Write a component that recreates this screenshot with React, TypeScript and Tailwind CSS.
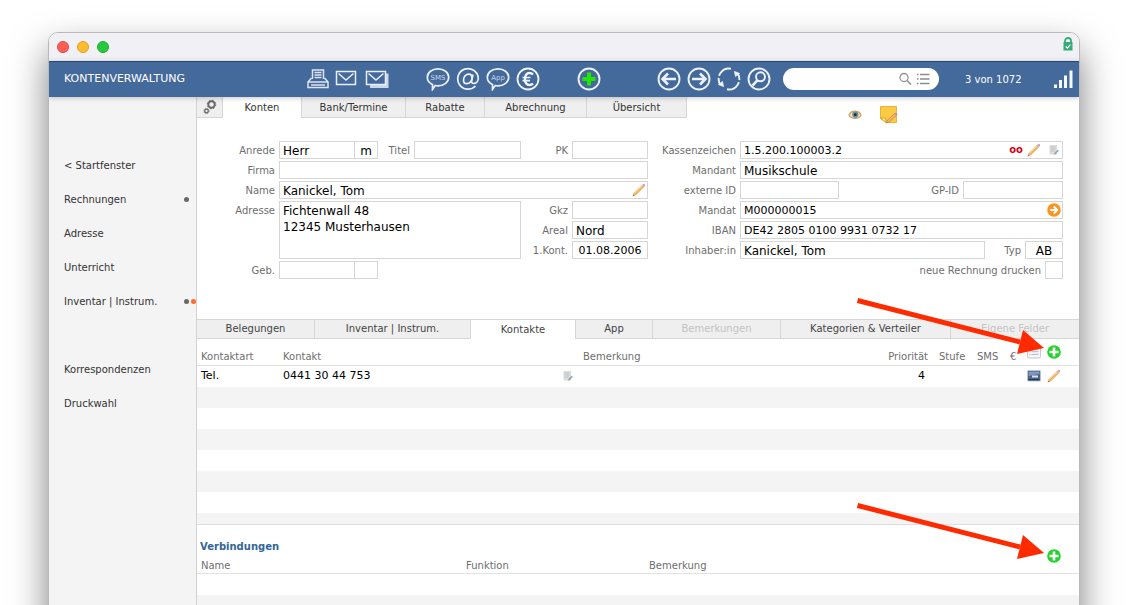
import type { ReactNode } from 'react'
import { clsx } from 'clsx'

const sidebarItems = [
  { label: '< Startfenster' },
  { label: 'Rechnungen', dot: true },
  { label: 'Adresse' },
  { label: 'Unterricht' },
  { label: 'Inventar | Instrum.', dot: true, alert: true },
  null,
  { label: 'Korrespondenzen' },
  { label: 'Druckwahl' },
]

const mainTabs = [
  { label: 'Konten', width: 'w-[78px]', active: true },
  { label: 'Bank/Termine', width: 'w-[104px]' },
  { label: 'Rabatte', width: 'w-[79px]' },
  { label: 'Abrechnung', width: 'w-[102px]' },
  { label: 'Übersicht', width: 'w-[101px]' },
]

const subTabs = [
  { label: 'Belegungen' },
  { label: 'Inventar | Instrum.' },
  { label: 'Kontakte', active: true },
  { label: 'App' },
  { label: 'Bemerkungen', disabled: true },
  { label: 'Kategorien & Verteiler' },
  { label: 'Eigene Felder', disabled: true },
]

/* ---------- icons ---------- */

function PrinterIcon() {
  return (
    <svg width="24" height="22" viewBox="0 0 24 22" fill="none" stroke="#dbe5f2" strokeWidth="1.5">
      <path d="M6.500 11V2h11v9M8.500 4.500h7M8.500 7h7M8.500 9.500h7" />
      <path d="M5.500 10 2 14v5.500h20V14L18.500 10M2 14h20M5 17h14" />
    </svg>
  )
}

function MailIcon() {
  return (
    <svg width="24" height="22" viewBox="0 0 24 22" fill="none" stroke="#e8eff8" strokeWidth="1.5">
      <path d="M2.500 3.500h19v13h-19zM4.500 5.500l7.500 6.500 7.500-6.500" />
    </svg>
  )
}

function MailStackIcon() {
  return (
    <svg width="24" height="22" viewBox="0 0 24 22" fill="none" stroke="#e8eff8" strokeWidth="1.5">
      <path d="M22 5.500v13H5" stroke="#cbd8e9" strokeWidth="3" />
      <path d="M1.500 3.500h19v13h-19zM3.500 5.500l7.500 6.500 7.500-6.500" />
    </svg>
  )
}

function BubbleIcon({ text }: { text: string }) {
  return (
    <svg width="24" height="24" viewBox="0 0 24 24" fill="none">
      <path
        d="M12 1.800c6 0 10.700 3.700 10.700 8.500s-4.700 8.500-10.700 8.500c-1 0-2 0-2.800-.3L6.500 22.500v-5C3.300 16 1.300 13.400 1.300 10.300 1.300 5.500 6 1.800 12 1.800z"
        stroke="#e8eff8"
        strokeWidth="1.700"
      />
      <text x="12" y="13" textAnchor="middle" fontSize="7" fill="#c9d7ea">{text}</text>
    </svg>
  )
}

function AtIcon() {
  return (
    <svg width="24" height="24" viewBox="0 0 24 24" fill="none" stroke="#eef3fa" strokeWidth="1.700">
      <path d="M19.500 19A10.300 10.300 0 1 1 22.300 11c0 3.200-2 5.500-4.500 5.500-2 0-2.500-1.200-2.100-3L17 7.500" />
      <path d="M16 11c0-2.200-1.200-3.800-3.200-3.800-3 0-5.300 2.700-5.300 5.800 0 2.200 1.200 3.700 3.300 3.700 3 0 5.200-2.900 5.200-5.700z" />
    </svg>
  )
}

function EuroIcon() {
  return (
    <svg width="24" height="24" viewBox="0 0 24 24" fill="none" stroke="#f2f6fb">
      <circle cx="12" cy="12" r="10.500" strokeWidth="1.800" />
      <path d="M17 7.500c-1-1-2-1.500-3.500-1.500C10.500 6 9 8.500 9 12s1.500 6 4.500 6c1.500 0 2.500-.5 3.500-1.500" strokeWidth="2.400" />
      <path d="M6.500 10.500h8M6.500 13.700h7.500" strokeWidth="1.700" />
    </svg>
  )
}

function CircleIcon({ children }: { children: ReactNode }) {
  return (
    <svg width="24" height="24" viewBox="0 0 24 24" fill="none" stroke="#edf2f9" strokeWidth="1.900">
      <circle cx="12" cy="12" r="10.500" />
      {children}
    </svg>
  )
}

function RefreshIcon() {
  return (
    <svg width="24" height="24" viewBox="0 0 24 24" fill="none" stroke="#edf2f9" strokeWidth="1.900">
      <path d="M14 1.700A10.500 10.500 0 0 0 3.500 18M10 22.300A10.500 10.500 0 0 0 20.500 6" strokeDasharray="15 2 30" />
      <path d="M17.500 4.500 22.500 6.500 18.500 9.500zM6.500 19.500 1.500 17.500 5.500 14.500z" fill="#edf2f9" strokeWidth=".8" />
    </svg>
  )
}

function LockIcon() {
  return (
    <svg width="10" height="14" viewBox="0 0 10 14" fill="none">
      <path d="M2 6V4a3 3 0 0 1 6 0v2" stroke="#35ab79" strokeWidth="1.800" />
      <rect x="0.500" y="5" width="9" height="8.500" fill="#35ab79" />
      <path d="m2.700 9.500 1.700 1.600 3-3.400" stroke="#fff" strokeWidth="1.200" />
    </svg>
  )
}

function GearsIcon() {
  return (
    <svg width="14" height="16" viewBox="0 0 14 16" fill="none" stroke="#6a6a6a">
      <circle cx="8.500" cy="5.500" r="3.200" strokeWidth="1.900" />
      <circle cx="8.500" cy="5.500" r="4.300" strokeWidth="1" strokeDasharray="1.700 1.677" />
      <circle cx="3.500" cy="12" r="1.800" strokeWidth="1.300" />
      <circle cx="3.500" cy="12" r="2.600" strokeWidth="0.800" strokeDasharray="1.100 .942" />
    </svg>
  )
}

function EyeIcon() {
  return (
    <svg width="14" height="10" viewBox="0 0 14 10">
      <path d="M1 5c2-5 10-5 12 0-2 4.500-10 4.500-12 0z" fill="#eee5d3" stroke="#d3a665" strokeWidth="1.300" />
      <circle cx="7.300" cy="4.700" r="3.100" fill="#6b8f9b" />
      <circle cx="7.300" cy="4.700" r="1.400" fill="#1e2d35" />
    </svg>
  )
}

function StickyNoteIcon() {
  return (
    <svg width="18" height="18" viewBox="0 0 18 18">
      <path d="M.5.500h16v16H6l-5.500-4z" fill="#fbcb45" stroke="#e8b53a" />
      <path d="M.5 12h5.300v4.500z" fill="#ffe28a" stroke="#d99a24" strokeWidth=".8" />
      <path d="m6.500 17 1-3 7.500-6.500 1.500 1.700-7 6.500z" fill="#f3b76a" stroke="#b8752e" strokeWidth=".6" />
      <path d="m14.500 7.800 1.500-1.200 1.700 1.600-1.500 1.500z" fill="#b791bd" />
    </svg>
  )
}

function PencilIcon() {
  return (
    <svg width="14" height="14" viewBox="0 0 14 14">
      <path d="M1 13 2 10.200l8.300-8 1.600 1.600-8.100 8.100z" fill="#f5b45c" stroke="#d9a05a" strokeWidth=".6" />
      <path d="m2.500 10.300 8.100-7.700" stroke="#ffdda6" strokeWidth=".8" />
      <path d="m10.200 2.200 1.100-1.200c.8-.6 2.200.6 1.700 1.500l-1.200 1.400z" fill="#c9a3d0" />
      <path d="M.7 13.300 1.200 11.900 2.200 12.800z" fill="#555" />
    </svg>
  )
}

function NoteIcon() {
  return (
    <svg width="10" height="12" viewBox="0 0 10 12">
      <path d="M.5 1h7.500v9.500H.5z" fill="#dcddde" />
      <path d="M1.500 3h5M1.500 5h5M1.500 7h4" stroke="#bfc1c3" />
      <path d="m5 10.500.7-2L9 5.500l.8 1.500-3 3z" fill="#8da9bf" />
      <path d="M4.500 10.800l1-1.500 1 1z" fill="#dba35b" />
    </svg>
  )
}

function OrangeArrowIcon() {
  return (
    <svg width="14" height="14" viewBox="0 0 14 14">
      <circle cx="7" cy="7" r="6.800" fill="#fa9423" />
      <path d="M3 7h7M6.800 3.500 10.300 7l-3.500 3.500" fill="none" stroke="#fff" strokeWidth="1.900" />
    </svg>
  )
}

function PlusIcon() {
  return (
    <svg width="14" height="14" viewBox="0 0 14 14">
      <circle cx="7" cy="7" r="6.800" fill="#22d32b" />
      <path d="M7 2.500v9M2.500 7h9" stroke="#fff" strokeWidth="2.600" />
    </svg>
  )
}

function ListIcon() {
  return (
    <svg width="14" height="14" viewBox="0 0 14 14" fill="none">
      <rect x=".5" y=".5" width="13" height="12.500" rx="1.500" fill="#f7f7f8" stroke="#c7c7cb" />
      <path d="M4.500 4h7M4.500 6.700h7M4.500 9.400h7" stroke="#a9bbd6" />
      <path d="M2.500 4h1M2.500 6.700h1M2.500 9.400h1" stroke="#8fa3c4" />
    </svg>
  )
}

function CardIcon() {
  return (
    <svg width="14" height="12" viewBox="0 0 14 12">
      <rect x=".5" y=".5" width="13" height="10.500" rx="1" fill="#4c6488" stroke="#b9c1cc" />
      <path d="M1.500 1.500h11v2.500L1.500 6z" fill="#7d97bd" />
      <path d="M5 5.500h6v2H5z" fill="#dbe3ed" />
      <path d="M1.500 9h11v1.300h-11z" fill="#26354f" />
    </svg>
  )
}

function RedArrow({ className }: { className: string }) {
  return (
    <svg width="187" height="60" viewBox="0 0 187 60" className={clsx('pointer-events-none absolute z-10', className)}>
      <path d="M.5 3.500 163 45" stroke="#ff2a00" strokeWidth="5" />
      <path d="M187 51 166 33 160 57z" fill="#ff2a00" />
    </svg>
  )
}

/* ---------- form parts ---------- */

function Label({ id, className, children }: { id: string; className: string; children: ReactNode }) {
  return (
    <label htmlFor={id} className={clsx('mr-1 h-[18px] shrink-0 text-right text-[10px] leading-5 whitespace-nowrap text-[#6e6e6e]', className)}>
      {children}
    </label>
  )
}

interface FieldProps {
  id: string
  value?: string
  className?: string
  inputClass?: string
  label?: string
  children?: ReactNode
}

function Field({ id, value = '', className, inputClass = 'text-xs', label, children }: FieldProps) {
  return (
    <div className={clsx('flex h-[18px] min-w-0 items-center border border-[#d6d6d6] bg-white', className)}>
      <input
        id={id}
        aria-label={label}
        defaultValue={value}
        className={clsx('h-4 w-full min-w-0 flex-1 bg-transparent px-[3px] pt-[2px] text-black outline-none', inputClass)}
      />
      {children}
    </div>
  )
}

function IconButton({ label, className, children }: { label: string; className?: string; children: ReactNode }) {
  return (
    <button type="button" aria-label={label} className={clsx('flex shrink-0 items-center justify-center', className)}>
      {children}
    </button>
  )
}

function AccountForm() {
  return (
    <form className="grid grid-cols-[451fr_415fr] items-start pr-4">
      <div className="flex flex-col gap-[2px]">
        <div className="flex">
          <Label id="anrede" className="w-[78px]">Anrede</Label>
          <Field id="anrede" value="Herr" className="w-[76px]" />
          <Field id="geschlecht" label="Geschlecht" value="m" className="-ml-px w-6" inputClass="text-center text-xs" />
          <Label id="titel" className="w-8">Titel</Label>
          <Field id="titel" className="flex-1" />
          <Label id="pk" className="w-[47px]">PK</Label>
          <Field id="pk" className="w-[76px]" />
        </div>
        <div className="flex">
          <Label id="firma" className="w-[78px]">Firma</Label>
          <Field id="firma" className="flex-1" />
        </div>
        <div className="flex">
          <Label id="name" className="w-[78px]">Name</Label>
          <Field id="name" value="Kanickel, Tom" className="flex-1">
            <IconButton label="Name bearbeiten" className="mr-px"><PencilIcon /></IconButton>
          </Field>
        </div>
        <div className="flex">
          <Label id="adresse" className="w-[78px]">Adresse</Label>
          <textarea
            id="adresse"
            defaultValue={'Fichtenwall 48\n12345 Musterhausen'}
            className="h-[58px] min-w-0 flex-1 resize-none border border-[#d6d6d6] px-[3px] py-px text-xs leading-4 text-black outline-none"
          />
          <div className="flex flex-col gap-[2px]">
            <div className="flex">
              <Label id="gkz" className="w-[47px]">Gkz</Label>
              <Field id="gkz" className="w-[76px]" />
            </div>
            <div className="flex">
              <Label id="areal" className="w-[47px]">Areal</Label>
              <Field id="areal" value="Nord" className="w-[76px]" />
            </div>
            <div className="flex">
              <Label id="kont" className="w-[47px]">1.Kont.</Label>
              <Field id="kont" value="01.08.2006" className="w-[76px]" inputClass="text-center text-[11px]" />
            </div>
          </div>
        </div>
        <div className="flex">
          <Label id="geb" className="w-[78px]">Geb.</Label>
          <Field id="geb" className="w-[76px]" />
          <Field id="alter" label="Alter" className="-ml-px w-6" />
        </div>
      </div>

      <div className="flex flex-col gap-[2px]">
        <div className="flex">
          <Label id="kassenzeichen" className="w-[88px]">Kassenzeichen</Label>
          <Field id="kassenzeichen" value="1.5.200.100003.2" className="flex-1" inputClass="text-[11px]">
            <span className="mr-1 text-[10px] leading-4 font-bold text-[#d0021b]">oo</span>
            <IconButton label="Kassenzeichen bearbeiten" className="mr-2"><PencilIcon /></IconButton>
            <IconButton label="Notiz" className="mr-[3px]"><NoteIcon /></IconButton>
          </Field>
        </div>
        <div className="flex">
          <Label id="mandant" className="w-[88px]">Mandant</Label>
          <Field id="mandant" value="Musikschule" className="flex-1" />
        </div>
        <div className="flex">
          <Label id="externe-id" className="w-[88px]">externe ID</Label>
          <Field id="externe-id" className="w-[99px]" />
          <Label id="gp-id" className="flex-1">GP-ID</Label>
          <Field id="gp-id" className="w-[100px]" />
        </div>
        <div className="flex">
          <Label id="mandat" className="w-[88px]">Mandat</Label>
          <Field id="mandat" value="M000000015" className="flex-1" inputClass="text-[11px]">
            <IconButton label="Mandat öffnen" className="mr-px"><OrangeArrowIcon /></IconButton>
          </Field>
        </div>
        <div className="flex">
          <Label id="iban" className="w-[88px]">IBAN</Label>
          <Field id="iban" value="DE42 2805 0100 9931 0732 17" className="flex-1" inputClass="text-[11px]" />
        </div>
        <div className="flex">
          <Label id="inhaber" className="w-[88px]">Inhaber:in</Label>
          <Field id="inhaber" value="Kanickel, Tom" className="flex-1" />
          <Label id="typ" className="w-9">Typ</Label>
          <Field id="typ" value="AB" className="w-[38px]" inputClass="text-center text-xs" />
        </div>
        <div className="flex">
          <Label id="drucken" className="flex-1">neue Rechnung drucken</Label>
          <input id="drucken" type="checkbox" className="size-[18px] appearance-none border border-[#d6d6d6] bg-white checked:bg-[#44699b]" />
        </div>
      </div>
    </form>
  )
}

/* ---------- page sections ---------- */

function Toolbar() {
  return (
    <header className="relative z-10 flex h-9 shrink-0 items-center border-t border-[#27497a] bg-[#44699b] pb-px text-white shadow-[0_1px_5px_rgba(0,0,0,0.22)]">
      <h1 className="w-[257px] shrink-0 pl-[15px] text-[11px] font-medium">KONTENVERWALTUNG</h1>
      <div className="flex shrink-0 gap-1">
        <IconButton label="Drucken" className="w-6"><PrinterIcon /></IconButton>
        <IconButton label="Brief" className="w-6"><MailIcon /></IconButton>
        <IconButton label="Serienbrief" className="w-[30px]"><MailStackIcon /></IconButton>
      </div>
      <div className="ml-[34px] flex shrink-0 gap-1.5">
        <IconButton label="SMS senden"><BubbleIcon text="SMS" /></IconButton>
        <IconButton label="E-Mail senden"><AtIcon /></IconButton>
        <IconButton label="App-Nachricht"><BubbleIcon text="App" /></IconButton>
        <IconButton label="Zahlung"><EuroIcon /></IconButton>
      </div>
      <IconButton label="Neu" className="ml-[37px]">
        <CircleIcon><path d="M12 5.500v13M5.500 12h13" stroke="#22e800" strokeWidth="4" /></CircleIcon>
      </IconButton>
      <div className="ml-14 flex shrink-0 gap-1.5">
        <IconButton label="Zurück">
          <CircleIcon><path d="M19 12H6M11 6.500 5.500 12l5.500 5.500" strokeWidth="2.600" /></CircleIcon>
        </IconButton>
        <IconButton label="Weiter">
          <CircleIcon><path d="M5 12h13M13 6.500l5.500 5.500-5.500 5.500" strokeWidth="2.600" /></CircleIcon>
        </IconButton>
        <IconButton label="Aktualisieren"><RefreshIcon /></IconButton>
        <IconButton label="Suchen">
          <CircleIcon>
            <circle cx="13.500" cy="9.800" r="4.500" />
            <path d="m10.500 13.200-5 5.500" strokeWidth="2.600" />
          </CircleIcon>
        </IconButton>
      </div>
      <div className="ml-3 flex h-[22px] w-[156px] shrink-0 items-center rounded-full bg-white pr-[9px]">
        <input aria-label="Schnellsuche" className="h-5 min-w-0 flex-1 bg-transparent pl-3 text-[11px] text-black outline-none" />
        <svg width="14" height="14" viewBox="0 0 14 14" fill="none" stroke="#949494" strokeWidth="1.300" className="mr-1 shrink-0">
          <circle cx="6" cy="5.500" r="4" />
          <path d="m9 8.500 4 4" strokeWidth="1.700" />
        </svg>
        <svg width="14" height="14" viewBox="0 0 14 14" stroke="#8c8c8c" strokeWidth="1.300" className="shrink-0">
          <path d="M4 2.500h9.500M4 7h9.500M4 11.500h9.500M1 2.500h1.500M1 7h1.500M1 11.500h1.500" />
        </svg>
      </div>
      <span className="ml-[26px] text-[10px] font-medium whitespace-nowrap">3 von 1072</span>
      <svg width="20" height="20" viewBox="0 0 20 20" fill="#f5f8fc" className="mr-1.5 ml-auto shrink-0">
        <path d="M1 15.500h3V19H1zM6 11h3v8H6zM11 6.500h3V19h-3zM16.500 1.500h3V19h-3z" />
      </svg>
    </header>
  )
}

function Sidebar() {
  return (
    <nav className="w-[148px] shrink-0 border-r border-[#d2d2d2] bg-[#f4f4f4] pt-[51px]">
      {sidebarItems.map((item, i) =>
        item ? (
          <a key={item.label} href="#" className="flex h-[34px] items-center justify-between pl-[15px] text-[10px] text-[#333]">
            {item.label}
            <span className="flex w-3 gap-[2px]">
              {item.dot && <span className="size-[5px] rounded-full bg-[#686868]" />}
              {item.alert && <span className="size-[5px] rounded-full bg-[#ff6b2c]" />}
            </span>
          </a>
        ) : (
          <div key={i} className="h-[34px]" />
        ),
      )}
    </nav>
  )
}

function ContactsTable() {
  return (
    <div className="relative">
      <RedArrow className="-top-[42px] right-[35px]" />
      <div className="h-[186px] overflow-hidden border-b border-[#dedede]">
        <table className="w-full table-fixed text-left">
          <colgroup>
            <col className="w-[82px]" />
            <col className="w-[300px]" />
            <col />
            <col className="w-[65px]" />
            <col className="w-[38px]" />
            <col className="w-[33px]" />
            <col className="w-[17px]" />
            <col className="w-[56px]" />
          </colgroup>
          <thead>
            <tr className="h-[26px] border-b border-[#e2e2e2] align-bottom text-[10px] leading-4 text-[#6e6e6e] *:px-1 *:font-normal">
              <th>Kontaktart</th>
              <th>Kontakt</th>
              <th>Bemerkung</th>
              <th className="text-right"><span className="mr-[3px]">Priorität</span></th>
              <th>Stufe</th>
              <th>SMS</th>
              <th>€</th>
              <th>
                <div className="flex gap-1.5 pb-1.5">
                  <IconButton label="Liste"><ListIcon /></IconButton>
                  <IconButton label="Kontakt hinzufügen"><PlusIcon /></IconButton>
                </div>
              </th>
            </tr>
          </thead>
          <tbody>
            <tr className="h-[22px] text-[11px] leading-5 text-black *:px-1">
              <td>Tel.</td>
              <td>
                <div className="flex items-center justify-between pr-0.5">
                  0441 30 44 753
                  <IconButton label="Notiz"><NoteIcon /></IconButton>
                </div>
              </td>
              <td />
              <td className="text-right"><span className="mr-1.5">4</span></td>
              <td />
              <td />
              <td />
              <td>
                <div className="flex items-center gap-1.5">
                  <IconButton label="Visitenkarte"><CardIcon /></IconButton>
                  <IconButton label="Kontakt bearbeiten"><PencilIcon /></IconButton>
                </div>
              </td>
            </tr>
            {Array.from({ length: 7 }, (_, i) => (
              <tr key={i} className="h-[21px] odd:bg-white even:bg-[#f4f4f4]">
                <td colSpan={8} />
              </tr>
            ))}
          </tbody>
        </table>
      </div>
    </div>
  )
}

function ConnectionsTable() {
  return (
    <section className="relative">
      <RedArrow className="-top-[23px] right-[35px]" />
      <div className="flex h-[34px] items-end justify-between pr-[18px] pl-[3px]">
        <h2 className="mb-1 text-[10px] leading-4 font-bold text-[#336699]">Verbindungen</h2>
        <IconButton label="Verbindung hinzufügen" className="-mb-1"><PlusIcon /></IconButton>
      </div>
      <table className="w-full table-fixed text-left">
        <colgroup>
          <col className="w-[265px]" />
          <col className="w-[183px]" />
          <col />
        </colgroup>
        <thead>
          <tr className="border-b border-[#e2e2e2] text-[10px] leading-[14px] text-[#6e6e6e] *:px-1 *:font-normal">
            <th>Name</th>
            <th>Funktion</th>
            <th>Bemerkung</th>
          </tr>
        </thead>
        <tbody>
          {Array.from({ length: 4 }, (_, i) => (
            <tr key={i} className="h-[21px] odd:bg-white even:bg-[#f4f4f4]">
              <td colSpan={3} />
            </tr>
          ))}
        </tbody>
      </table>
    </section>
  )
}

export default function App() {
  return (
    <div className="h-screen overflow-hidden bg-white pt-8 pr-[55px] pl-12 font-['DejaVu_Sans',Verdana,sans-serif]">
      <div className="flex min-h-[115vh] flex-col overflow-hidden rounded-[10px] border border-[#b9b9bb] bg-white shadow-[0_18px_36px_rgba(0,0,0,0.5)]">
        <div className="flex h-7 shrink-0 items-center gap-2 bg-[#f0f0f5] pr-1.5 pl-2">
          <button aria-label="Schließen" className="size-3 rounded-full border border-[#e2463f] bg-[#ff5f57]" />
          <button aria-label="Minimieren" className="size-3 rounded-full border border-[#e0a023] bg-[#febc2e]" />
          <button aria-label="Maximieren" className="size-3 rounded-full border border-[#1dad2b] bg-[#28c840]" />
          <span className="mb-1.5 ml-auto"><LockIcon /></span>
        </div>

        <Toolbar />

        <div className="flex flex-1">
          <Sidebar />
          <main className="min-w-0 flex-1">
            <div className="flex h-11 items-start">
              <IconButton label="Einstellungen" className="h-[21px] w-[26px] border-r border-b border-[#d6d6d6] bg-[#efefef]">
                <GearsIcon />
              </IconButton>
              {mainTabs.map((tab) => (
                <button
                  key={tab.label}
                  type="button"
                  className={clsx(
                    'h-[21px] shrink-0 text-[10px] text-[#333]',
                    tab.width,
                    tab.active ? 'bg-white' : 'border-b border-l border-[#d6d6d6] bg-[#efefef] last-of-type:border-r',
                  )}
                >
                  {tab.label}
                </button>
              ))}
              <div className="mt-[9px] mr-[181px] ml-auto flex items-center gap-[18px]">
                <EyeIcon />
                <StickyNoteIcon />
              </div>
            </div>

            <AccountForm />

            <div className="mt-10 grid h-5 grid-cols-[118fr_156fr_105fr_77fr_128fr_170fr_128fr]">
              {subTabs.map((tab) => (
                <button
                  key={tab.label}
                  type="button"
                  disabled={tab.disabled}
                  className={clsx(
                    'border-t border-r border-[#d6d6d6] pb-px text-[10px] whitespace-nowrap last:border-r-0',
                    tab.active ? 'bg-white' : 'border-b bg-[#efefef]',
                    tab.disabled ? 'text-[#c4c4c4]' : 'text-[#444]',
                  )}
                >
                  {tab.label}
                </button>
              ))}
            </div>

            <ContactsTable />
            <ConnectionsTable />
          </main>
        </div>
      </div>
    </div>
  )
}
